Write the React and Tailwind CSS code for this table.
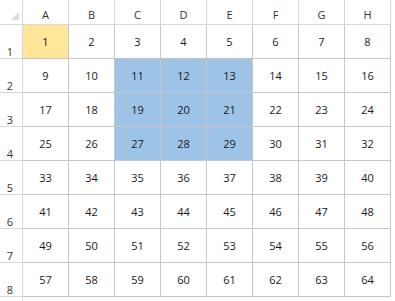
import React from 'react';

const cols = ['A', 'B', 'C', 'D', 'E', 'F', 'G', 'H'];
const rows = [1, 2, 3, 4, 5, 6, 7, 8];

function cellBg(r, c) {
  if (r === 1 && c === 0) return 'bg-[#ffe699]';
  if (r >= 2 && r <= 4 && c >= 2 && c <= 4) return 'bg-[#9dc3e6]';
  return 'bg-white';
}

export default function App() {
  return (
    <div
      className="w-[395px] h-[301px] bg-white overflow-hidden text-[11px] text-[#1a1a1a]"
      style={{ fontFamily: '"Open Sans", "Liberation Sans", sans-serif' }}
    >
      <div className="grid grid-cols-[23px_repeat(8,46px)] grid-rows-[25px_repeat(8,34px)]">
        {/* corner */}
        <div className="relative border-r border-b border-[#d8d8d8]">
          <div className="absolute right-[3px] bottom-[4px] w-0 h-0 border-l-[8px] border-l-transparent border-b-[8px] border-b-[#dcdcdc]" />
        </div>
        {cols.map((c) => (
          <div
            key={c}
            className="flex items-end justify-center pb-[4px] leading-none border-r border-b border-[#d8d8d8] text-[#333]"
          >
            {c}
          </div>
        ))}

        {rows.map((r) => (
          <React.Fragment key={r}>
            <div className="flex items-end justify-center pb-[1px] pr-[2px] leading-none border-r border-b border-[#d8d8d8] text-[#333]">
              {r}
            </div>
            {cols.map((c, ci) => (
              <div
                key={c}
                className={`flex items-center justify-center pt-[1px] border-r border-b border-[#c6c6c6] ${cellBg(r, ci)}`}
              >
                {(r - 1) * 8 + ci + 1}
              </div>
            ))}
          </React.Fragment>
        ))}
      </div>
      <div className="w-[23px] h-[10px] border-r border-[#d8d8d8]" />
    </div>
  );
}
